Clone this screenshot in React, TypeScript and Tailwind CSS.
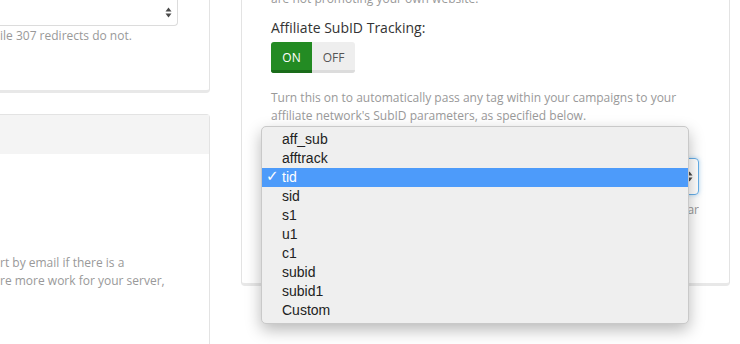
const SUBID_OPTIONS = [
  "aff_sub",
  "afftrack",
  "tid",
  "sid",
  "s1",
  "u1",
  "c1",
  "subid",
  "subid1",
  "Custom",
];

// Tiny up/down arrows used by native-looking selects.
function SelectArrows() {
  return (
    <svg width="7" height="11" viewBox="0 0 7 11" className="fill-[#4a4a4a]">
      <path d="M3.5 0.5 L6.5 4.5 L0.5 4.5 Z" />
      <path d="M0.5 6.5 L6.5 6.5 L3.5 10.5 Z" />
    </svg>
  );
}

function SubIdMenu() {
  return (
    <div className="absolute left-[261px] top-[126px] w-[428px] rounded-[5px] border border-[#c9c9c9] bg-[#efefef] pb-[3px] pt-[3px] font-['Liberation_Sans',Arial,sans-serif] text-[14px] text-[#222] shadow-[0_6px_16px_rgba(0,0,0,0.28)]">
      {SUBID_OPTIONS.map((opt) => {
        const selected = opt === "tid";
        return (
          <div
            key={opt}
            className={`relative flex h-[19px] items-center pl-[20px] leading-[19px] ${
              selected ? "bg-[#4d9bfa] text-white" : ""
            }`}
          >
            {selected && (
              <span className="absolute left-[4px] top-[-1px] font-['DejaVu_Sans',sans-serif] text-[15px] leading-[19px]">
                ✓
              </span>
            )}
            {opt}
          </div>
        );
      })}
    </div>
  );
}

export default function App() {
  return (
    <div className="relative h-[344px] w-[740px] overflow-hidden bg-white font-['Open_Sans',sans-serif]">
      <div className="flex gap-[31px]">
        {/* left column */}
        <div className="flex w-[210px] shrink-0 flex-col gap-[21px]">
          <div className="rounded-br-[4px] border-r border-b-[3px] border-r-[#e3e3e3] border-b-[#e8e8e8] bg-white pb-[45px]">
            <div className="flex h-[26px] w-[178px] items-center justify-end rounded-br-[4px] border-r border-b border-[#dcdcdc] pr-[5px]">
              <SelectArrows />
            </div>
            <p className="mt-[1px] whitespace-nowrap text-[12px] leading-[18px] text-[#999]">
              ile 307 redirects do not.
            </p>
          </div>
          <div className="h-[260px] rounded-tr-[4px] border-t border-r border-[#e3e3e3] bg-white">
            <div className="h-[39px] bg-[#f4f4f4]"></div>
            <div className="pt-[100px] text-[12px] leading-[18px] text-[#999]">
              <p className="whitespace-nowrap">rt by email if there is a</p>
              <p className="whitespace-nowrap">re more work for your server,</p>
            </div>
          </div>
        </div>

        {/* right column */}
        <div className="h-[286px] w-[489px] shrink-0 rounded-b-[4px] border-x border-b-[3px] border-x-[#e3e3e3] border-b-[#e8e8e8] bg-white pl-[29px] pr-[30px]">
          <p className="mt-[-10px] text-[12px] leading-[18px] text-[#999]">
            are not promoting your own website.
          </p>
          <div className="mt-[10px] text-[14px] leading-[20px] text-[#333]">
            Affiliate SubID Tracking:
          </div>
          <div className="mt-[4px] flex h-[31px] w-[84px] overflow-hidden rounded-[3px] text-[12px]">
            <div className="flex w-[41px] items-center justify-center border-b-[3px] border-[#1a6c1a] bg-[#238b23] pt-[3px] text-white">
              ON
            </div>
            <div className="flex flex-1 items-center justify-center border-b-[3px] border-[#dcdcdc] bg-[#eeeeee] pt-[3px] text-[#555]">
              OFF
            </div>
          </div>
          <p className="mt-[16px] text-[12px] leading-[18px] text-[#999]">
            Turn this on to automatically pass any tag within your campaigns to your
            affiliate network's SubID parameters, as specified below.
          </p>
          <div className="mt-[33px] flex h-[37px] items-center justify-end rounded-[4px] border border-[#66afe9] pr-[5px] shadow-[0_0_4px_rgba(102,175,233,0.5)]">
            <SelectArrows />
          </div>
          <div className="mt-[6px] flex justify-end overflow-hidden text-[12px] leading-[18px] text-[#999]">
            <span className="whitespace-nowrap">
              Choose Custom if your network names its parameter something similar
            </span>
          </div>
        </div>
      </div>

      <SubIdMenu />
    </div>
  );
}
